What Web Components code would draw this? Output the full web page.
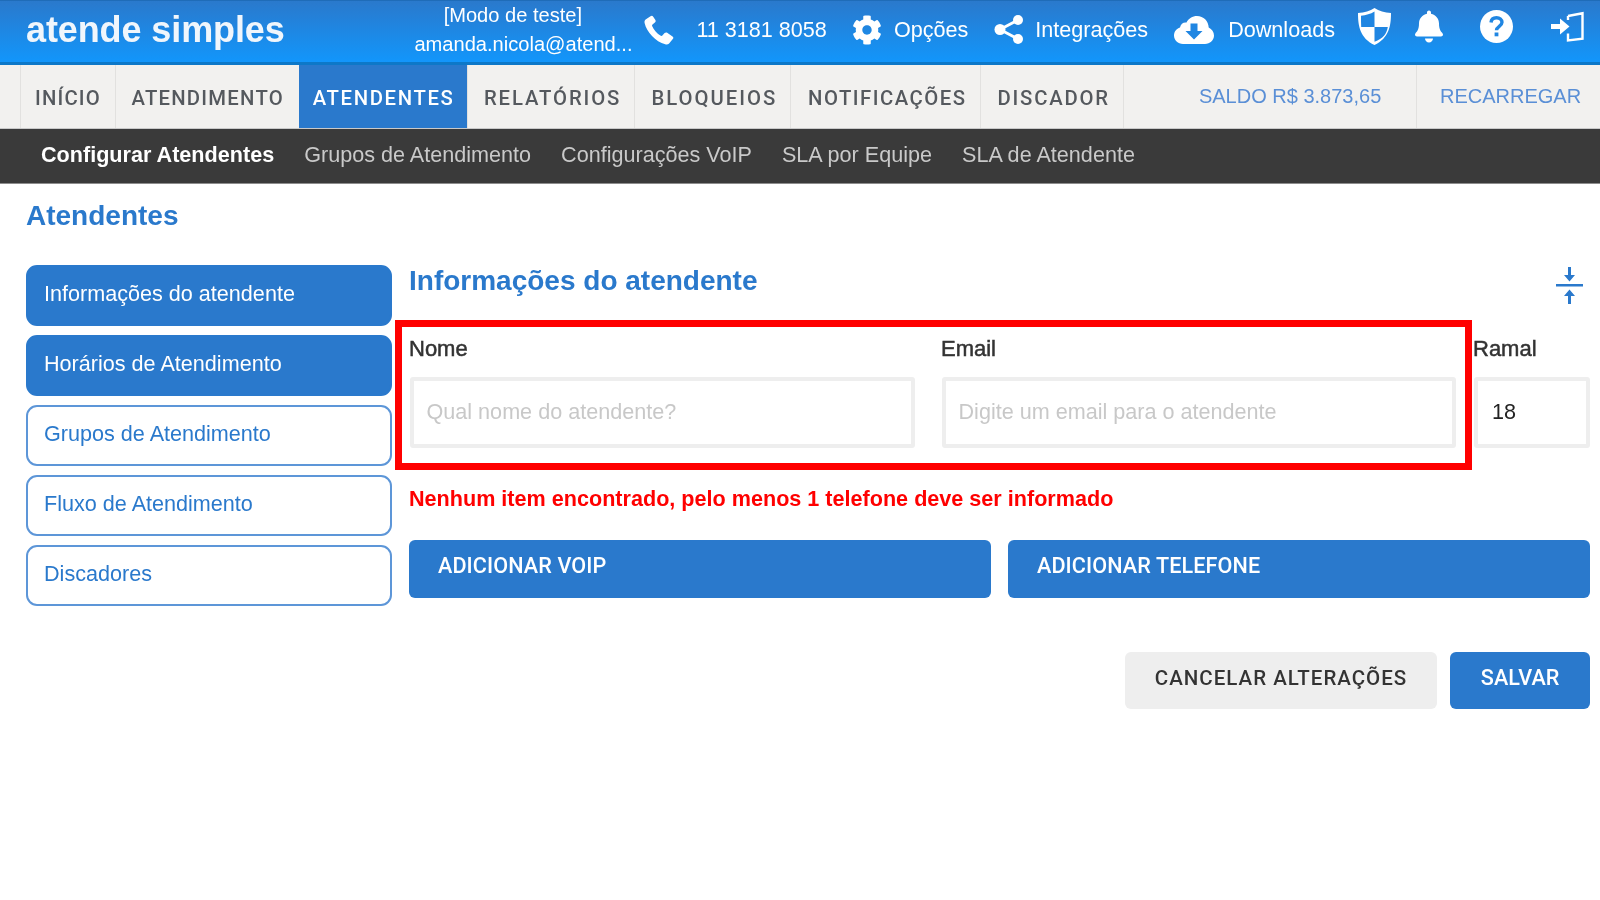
<!DOCTYPE html>
<html lang="pt-BR">
<head>
<meta charset="utf-8">
<title>Atendentes</title>
<style>
  html, body { margin: 0; height: 100%; background: #fff; }
  body { font: 21.6px "Liberation Sans", Arial, sans-serif; overflow: hidden; }
  /* the reference is an upscaled capture, everything in it is a bit soft */
  app-topbar, app-nav, app-subnav, app-page { filter: blur(.35px); }
  svg { display: block; }
</style>
</head>
<body>
<app-topbar></app-topbar>
<app-nav></app-nav>
<app-subnav></app-subnav>
<app-page></app-page>

<script>
const ICONS = {
  phone: `<svg width="31" height="30" viewBox="0 0 31 30"><path d="M6.5 1.2 1.6 4.6C.6 5.4.3 6.6.6 8c2 9 11 18.800 20.600 21.300 1.700.400 3 .100 3.900-.900l3.700-4.300c.800-1 .700-2-.300-2.700l-5.300-3.600c-.900-.600-1.800-.500-2.600.300l-2.200 2.400c-.500.500-1 .600-1.600.300-3.700-2-7.200-6-8.700-9.800-.200-.600-.100-1.100.400-1.500l2.400-1.900c.800-.700 1-1.600.500-2.600L9.200 1.800C8.500.500 7.600.400 6.500 1.200z" fill="#fff"/></svg>`,
  cog: `<svg width="30" height="30" viewBox="0 0 512 512"><path fill="#fff" d="M487.400 315.700l-42.600-24.600c4.300-23.200 4.300-47 0-70.200l42.600-24.600c4.900-2.800 7.100-8.600 5.500-14-11.100-35.600-30-67.800-54.700-94.600-3.800-4.100-10-5.100-14.800-2.300L380.800 110c-17.900-15.400-38.500-27.300-60.800-35.100V25.800c0-5.600-3.900-10.500-9.400-11.700-36.700-8.200-74.300-7.800-109.200 0-5.500 1.200-9.400 6.100-9.400 11.700V75c-22.200 7.900-42.800 19.800-60.800 35.100L88.700 85.500c-4.900-2.800-11-1.900-14.800 2.300-24.700 26.700-43.600 58.900-54.700 94.600-1.700 5.400.6 11.200 5.500 14L67.300 221c-4.300 23.200-4.300 47 0 70.200l-42.600 24.600c-4.900 2.800-7.100 8.600-5.500 14 11.100 35.600 30 67.800 54.700 94.600 3.800 4.100 10 5.100 14.800 2.300l42.600-24.600c17.900 15.400 38.500 27.300 60.800 35.100v49.200c0 5.600 3.900 10.500 9.400 11.700 36.700 8.200 74.300 7.800 109.200 0 5.500-1.200 9.400-6.100 9.400-11.700v-49.200c22.200-7.900 42.800-19.800 60.800-35.100l42.600 24.600c4.900 2.800 11 1.900 14.800-2.300 24.700-26.700 43.600-58.900 54.700-94.600 1.500-5.500-.7-11.300-5.600-14.100zM256 336c-44.100 0-80-35.900-80-80s35.900-80 80-80 80 35.900 80 80-35.900 80-80 80z"/></svg>`,
  share: `<svg width="30" height="29" viewBox="0 0 30 29" fill="#fff"><circle cx="6" cy="14.500" r="5.500"/><circle cx="24" cy="5" r="5"/><circle cx="24" cy="24" r="5"/><path d="M6 14.500 24 5M6 14.500 24 24" stroke="#fff" stroke-width="3"/></svg>`,
  cloud: `<svg width="40" height="28" viewBox="0 0 40 28"><path fill="#fff" d="M9 28C4 28 0 24.200 0 19.500c0-3.700 2.500-7 6-8C6.600 8 9.400 6 12.500 6.500 14.500 2.500 18.500 0 23 0c6.500 0 11.500 5 11.700 11.500C37.800 13 40 16 40 19.500 40 24.200 36 28 31 28z"/><path fill="#2086e2" d="M16.500 7.500h7v7.500h5L20 23.500 11.500 15h5z"/></svg>`,
  shield: `<svg width="33" height="37" viewBox="0 0 33 37"><path fill="#fff" d="M16.500 0C12 3 6.500 4.500 0 5c0 13 2 25 16.500 32C31 30 33 18 33 5 26.500 4.500 21 3 16.500 0z"/><path fill="#2086e2" d="M16.500 3.500V19H3.200C3 15.500 3 11.500 3 7.800 8 7.200 12.500 6 16.500 3.500zM16.500 19h13.300c-.900 6.500-4.700 11.700-13.300 14.800z"/></svg>`,
  bell: `<svg width="28" height="33" viewBox="0 0 448 512"><path fill="#fff" d="M224 512c35.320 0 63.970-28.650 63.970-64H160.030c0 35.350 28.650 64 63.970 64zm215.390-149.710c-19.320-20.760-55.470-51.990-55.470-154.290 0-77.700-54.480-139.900-127.940-155.160V32c0-17.670-14.320-32-31.980-32s-31.980 14.330-31.980 32v20.840C118.560 68.100 64.080 130.300 64.080 208c0 102.300-36.150 133.530-55.470 154.290-6 6.450-8.660 14.160-8.610 21.710.11 16.400 12.980 32 32.100 32h383.800c19.120 0 32-15.600 32.100-32 .05-7.550-2.610-15.270-8.610-21.710z"/></svg>`,
  question: `<svg width="33" height="33" viewBox="0 0 33 33"><circle cx="16.500" cy="16.500" r="16.500" fill="#fff"/><path d="M11 12.500c.3-3 2.500-4.800 5.500-4.800 3.200 0 5.500 1.900 5.500 4.600 0 4-5.500 4-5.500 8" fill="none" stroke="#2086e2" stroke-width="3.400"/><rect x="14.600" y="22.500" width="3.800" height="3.800" fill="#2086e2"/></svg>`,
  signin: `<svg width="34" height="31" viewBox="0 0 34 31"><path fill="none" stroke="#fff" stroke-width="2.400" d="M17 5 31.500 2.200v25.600L17 29.500v-7M17 9V5"/><path fill="#fff" d="M0 13h9V7.500l9.500 8-9.500 8V18H0z"/></svg>`,
  compact: `<svg width="27" height="37" viewBox="0 0 27 37"><path fill="#2a79cc" d="M0 17h27v2.400H0zM12 0h3v8h4l-5.500 6.500L8 8h4zM12 37v-8H8l5.500-6.500L19 29h-4v8z"/></svg>`
}

const topbarTemplate = document.createElement('template')
topbarTemplate.innerHTML = `
  <style>
    :host {
      display: flex;
      align-items: center;
      box-sizing: border-box;
      height: 65px;
      padding: 0 15px 4px 26px;
      border-top: 1px solid #1f6cb8;
      border-bottom: 3px solid #0d78c8;
      background: linear-gradient(#2a79cc, #1296fb);
      color: #fff;
      white-space: nowrap;
    }
    .logo { font-size: 36px; font-weight: bold; letter-spacing: -.1px; width: 384px; color: #f0f6fc; }
    .user { width: 219px; text-align: center; font-size: 20.100px; line-height: 29px; margin-top: 1px; }
    .user div:last-child { margin-left: 11px; }
    .item { display: flex; align-items: center; }
    .phone { margin-left: 22px; }
    .phone span { margin-left: 21px; }
    .opt { margin-left: 25px; }
    .opt span { margin-left: 12px; }
    .share { margin-left: 26px; }
    .share span { margin-left: 11px; }
    .cloud { margin-left: 26px; }
    .cloud span { margin-left: 14px; }
    .ic-shield { margin-left: 23px; }
    .ic-bell { margin-left: 24px; }
    .ic-q { margin-left: 37px; }
    .ic-in { margin-left: 38px; }
  </style>
  <div class="logo">atende simples</div>
  <div class="user"><div>[Modo de teste]</div><div>amanda.nicola@atend...</div></div>
  <div class="item phone">${ICONS.phone}<span>11 3181 8058</span></div>
  <div class="item opt">${ICONS.cog}<span>Opções</span></div>
  <div class="item opt share">${ICONS.share}<span>Integrações</span></div>
  <div class="item cloud">${ICONS.cloud}<span>Downloads</span></div>
  <div class="ic-shield">${ICONS.shield}</div>
  <div class="ic-bell">${ICONS.bell}</div>
  <div class="ic-q">${ICONS.question}</div>
  <div class="ic-in">${ICONS.signin}</div>
`

class AppTopbar extends HTMLElement {
  constructor() {
    super()
    this.attachShadow({ mode: 'open' }).appendChild(topbarTemplate.content.cloneNode(true))
  }
}

// label, width, letter spacing, active
const TABS = [
  ['INÍCIO', 95, 1.15], ['ATENDIMENTO', 184.500, 1.25], ['ATENDENTES', 167.500, 1.65, true], ['RELATÓRIOS', 167.500, 1.9],
  ['BLOQUEIOS', 156, 2], ['NOTIFICAÇÕES', 190, 1.5], ['DISCADOR', 143, 1.8]
]

class AppNav extends HTMLElement {
  constructor() {
    super()
    const tabs = TABS.map(([label, w, ls, active]) =>
      `<a class="tab${active ? ' on' : ''}" style="width:${w}px;letter-spacing:${ls}px">${label}</a>`).join('')
    this.attachShadow({ mode: 'open' }).innerHTML = `
      <style>
        :host {
          display: flex;
          box-sizing: border-box;
          height: 64px;
          padding-left: 20px;
          background: #f2f1ef;
          border-bottom: 1px solid #c9c9c9;
          white-space: nowrap;
        }
        .tab {
          display: flex;
          align-items: center;
          justify-content: center;
          box-sizing: border-box;
          padding-top: 3px;
          border-left: 1px solid #e2e1df;
          font: 500 20.300px Roboto, "Liberation Sans", sans-serif;
          color: #55595e;
        }
        .tab:nth-child(n+5) { padding-left: 3px; }
        .tab.on { background: #2a79cc; color: #fff; border-left-color: #2a79cc; }
        .link {
          display: flex;
          align-items: center;
          justify-content: center;
          box-sizing: border-box;
          padding-bottom: 1px;
          border-left: 1px solid #e2e1df;
          font-size: 20px;
          color: #5a8fd6;
        }
        .saldo { width: 293px; padding-left: 40px; }
        .rec { width: 184px; padding-left: 4px; }
      </style>
      ${tabs}
      <a class="link saldo">SALDO R$ 3.873,65</a>
      <a class="link rec">RECARREGAR</a>
    `
  }
}

class AppSubnav extends HTMLElement {
  constructor() {
    super()
    this.attachShadow({ mode: 'open' }).innerHTML = `
      <style>
        :host {
          display: flex;
          align-items: center;
          gap: 30px;
          box-sizing: border-box;
          height: 55px;
          padding: 0 0 2px 41px;
          background: #3a3a3a;
          border-bottom: 1px solid #8d8d8d;
          color: #c9c9c9;
          font-size: 21.600px;
          white-space: nowrap;
        }
        b { color: #fff; }
      </style>
      <b>Configurar Atendentes</b>
      <span>Grupos de Atendimento</span>
      <span>Configurações VoIP</span>
      <span>SLA por Equipe</span>
      <span>SLA de Atendente</span>
    `
  }
}

class SideButton extends HTMLElement {
  constructor() {
    super()
    this.attachShadow({ mode: 'open' }).innerHTML = `
      <style>
        :host {
          display: block;
          box-sizing: border-box;
          height: 61px;
          padding: 0 0 0 16px;
          border: 2px solid #5d96d8;
          border-radius: 11px;
          background: #fff;
          color: #2a79cc;
          font-size: 21.600px;
          line-height: 54px;
        }
        :host([active]) { background: #2a79cc; border-color: #2a79cc; color: #fff; }
      </style>
      <slot></slot>
    `
  }
}

class FormField extends HTMLElement {
  constructor() {
    super()
    const label = this.getAttribute('label')
    const value = this.getAttribute('value')
    const hint = this.getAttribute('hint')
    this.attachShadow({ mode: 'open' }).innerHTML = `
      <style>
        :host { display: block; color: #333; }
        label { display: block; height: 57px; line-height: 57px; font-size: 22px; -webkit-text-stroke: .5px #333; }
        .box {
          box-sizing: border-box;
          height: 71px;
          margin-left: 1px;
          padding-left: 14px;
          border: 4px solid #eee;
          border-radius: 3px;
          line-height: 62px;
          font-size: 21.600px;
          color: #222;
        }
        .hint { margin-left: -1.500px; color: #c8c8c8; }
      </style>
      <label>${label}</label>
      <div class="box">${value ? value : `<span class="hint">${hint}</span>`}</div>
    `
  }
}

class ActionButton extends HTMLElement {
  constructor() {
    super()
    this.attachShadow({ mode: 'open' }).innerHTML = `
      <style>
        :host {
          display: block;
          box-sizing: border-box;
          height: 57.500px;
          padding: 0 29px;
          border-radius: 6px;
          background: #2a79cc;
          color: #fff;
          font: 500 21.600px/52px Roboto, "Liberation Sans", sans-serif;
          letter-spacing: .1px;
          white-space: nowrap;
        }
        :host([plain]) { background: #eee; color: #333; padding: 0 30px; font-size: 20.500px; letter-spacing: 1px; }
        :host([tight]) { padding: 0 30.500px; }
      </style>
      <slot></slot>
    `
  }
}

class AppPage extends HTMLElement {
  constructor() {
    super()
    this.attachShadow({ mode: 'open' }).innerHTML = `
      <style>
        :host { display: block; padding: 15px 10px 0 26px; }
        h1 { margin: 0; height: 66px; font-size: 28px; line-height: 33px; color: #2a79cc; }
        .cols { display: grid; grid-template-columns: 366px minmax(0, 1fr); column-gap: 17px; }
        .side { display: flex; flex-direction: column; gap: 9px; }
        .head { display: flex; justify-content: space-between; height: 55px; }
        h2 { margin: 0; font-size: 28px; line-height: 31px; color: #2a79cc; }
        .compact { margin: 2px 7px 0 0; }
        .row { position: relative; display: grid; grid-template-columns: 506px 515px 108px; column-gap: 26px; }
        .row form-field:nth-child(3) { margin-left: -9px; width: 117px; }
        .mark {
          position: absolute;
          box-sizing: border-box;
          left: -14px;
          top: 0;
          width: 1077px;
          height: 150px;
          border: 7px solid #f00;
        }
        .err { margin: 35px 0 0; height: 57px; line-height: 32px; font-size: 21.600px; font-weight: bold; color: #f00; }
        .two { display: grid; grid-template-columns: 1fr 1fr; column-gap: 17px; }
        .foot { display: flex; justify-content: flex-end; gap: 13px; margin-top: 54px; }
      </style>
      <h1>Atendentes</h1>
      <div class="cols">
        <div class="side">
          <side-button active>Informações do atendente</side-button>
          <side-button active>Horários de Atendimento</side-button>
          <side-button>Grupos de Atendimento</side-button>
          <side-button>Fluxo de Atendimento</side-button>
          <side-button>Discadores</side-button>
        </div>
        <div>
          <div class="head">
            <h2>Informações do atendente</h2>
            <div class="compact">${ICONS.compact}</div>
          </div>
          <div class="row">
            <form-field label="Nome" hint="Qual nome do atendente?"></form-field>
            <form-field label="Email" hint="Digite um email para o atendente"></form-field>
            <form-field label="Ramal" value="18"></form-field>
            <div class="mark"></div>
          </div>
          <p class="err">Nenhum item encontrado, pelo menos 1 telefone deve ser informado</p>
          <div class="two">
            <action-button>ADICIONAR VOIP</action-button>
            <action-button>ADICIONAR TELEFONE</action-button>
          </div>
          <div class="foot">
            <action-button plain>CANCELAR ALTERAÇÕES</action-button>
            <action-button tight>SALVAR</action-button>
          </div>
        </div>
      </div>
    `
  }
}

customElements.define('app-topbar', AppTopbar)
customElements.define('app-nav', AppNav)
customElements.define('app-subnav', AppSubnav)
customElements.define('side-button', SideButton)
customElements.define('form-field', FormField)
customElements.define('action-button', ActionButton)
customElements.define('app-page', AppPage)
</script>
</body>
</html>
